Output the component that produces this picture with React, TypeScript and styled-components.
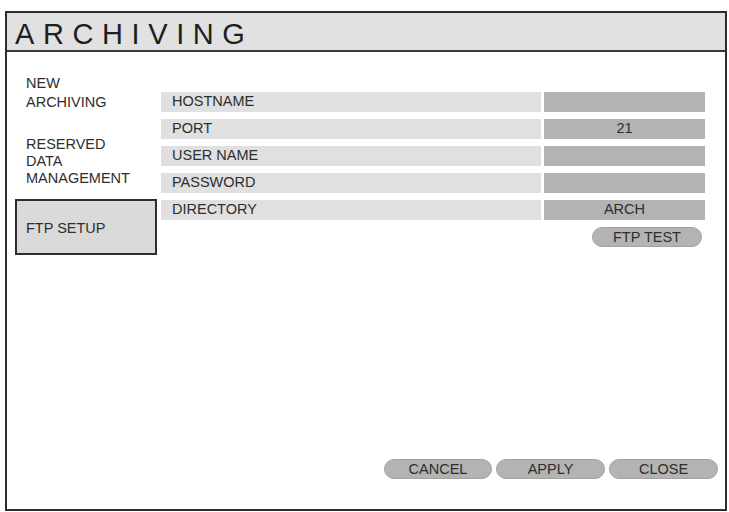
import React from "react";
import styled, { createGlobalStyle } from "styled-components";

const GlobalStyle = createGlobalStyle`
  html, body {
    margin: 0;
    padding: 0;
    background: #ffffff;
  }
  body {
    font-family: "Liberation Sans", Arial, sans-serif;
    color: #2e2e2e;
  }
`;

const Page = styled.div`
  padding: 11px 0 0 5px;
`;

const Frame = styled.div`
  box-sizing: border-box;
  width: 722px;
  height: 500px;
  border: 2px solid #2e2e2e;
  display: flex;
  flex-direction: column;
  background: #ffffff;
`;

const TitleBar = styled.div`
  height: 39px;
  box-sizing: border-box;
  padding: 6px 8px 0;
  background: #e1e1e1;
  border-bottom: 2px solid #3a3a3a;
`;

const Title = styled.h1`
  margin: 0;
  font-size: 29px;
  font-weight: normal;
  line-height: 31px;
  letter-spacing: 8.6px;
  color: #1e1e1e;
`;

const Body = styled.div`
  flex: 1;
  display: flex;
  flex-direction: column;
`;

const Columns = styled.div`
  flex: 1;
  display: flex;
  gap: 4px;
  padding: 0 20px 0 8px;
`;

const Nav = styled.nav`
  width: 142px;
  display: flex;
  flex-direction: column;
  padding-top: 22px;
`;

const NavItem = styled.div<{ $active?: boolean; $lh: number; $gap: number }>`
  font-size: 14.5px;
  line-height: ${(p) => p.$lh}px;
  margin-bottom: ${(p) => p.$gap}px;
  color: #2e2e2e;
  ${(p) =>
    p.$active
      ? `
    box-sizing: border-box;
    height: 56px;
    display: flex;
    align-items: center;
    padding: 2px 0 0 9px;
    background: #dadada;
    border: 2px solid #2e2e2e;
  `
      : `
    padding-left: 11px;
  `}
`;

const Form = styled.div`
  flex: 1;
  display: flex;
  flex-direction: column;
  gap: 7px;
  padding-top: 40px;
`;

const Row = styled.div`
  display: flex;
  gap: 3px;
  height: 20px;
`;

const Label = styled.div`
  flex: 1;
  background: #e0e0e0;
  font-size: 14.5px;
  line-height: 19px;
  padding-left: 11px;
  color: #2e2e2e;
`;

const Value = styled.div`
  width: 161px;
  background: #b3b3b3;
  font-size: 14.5px;
  line-height: 19px;
  text-align: center;
  color: #2e2e2e;
`;

const TestRow = styled.div`
  display: flex;
  justify-content: flex-end;
  padding-right: 3px;
`;

const PillButton = styled.button<{ $w: number }>`
  box-sizing: border-box;
  width: ${(p) => p.$w}px;
  height: 20px;
  padding: 0;
  border: 1px solid #a2a2a2;
  border-radius: 10px;
  background: #b3b3b3;
  font-family: "Liberation Sans", Arial, sans-serif;
  font-size: 14.5px;
  line-height: 18px;
  color: #2e2e2e;
  cursor: pointer;
`;

const Footer = styled.div`
  display: flex;
  justify-content: flex-end;
  gap: 4px;
  padding: 0 7px 30px 0;
`;

const fields: { label: string; value: string }[] = [
  { label: "HOSTNAME", value: "" },
  { label: "PORT", value: "21" },
  { label: "USER NAME", value: "" },
  { label: "PASSWORD", value: "" },
  { label: "DIRECTORY", value: "ARCH" },
];

export default function App() {
  return (
    <>
      <GlobalStyle />
      <Page>
        <Frame>
          <TitleBar>
            <Title>ARCHIVING</Title>
          </TitleBar>
          <Body>
            <Columns>
              <Nav>
                <NavItem $lh={19} $gap={24}>
                  NEW
                  <br />
                  ARCHIVING
                </NavItem>
                <NavItem $lh={17} $gap={12}>
                  RESERVED
                  <br />
                  DATA
                  <br />
                  MANAGEMENT
                </NavItem>
                <NavItem $active $lh={17} $gap={0}>
                  FTP SETUP
                </NavItem>
              </Nav>
              <Form>
                {fields.map((f) => (
                  <Row key={f.label}>
                    <Label>{f.label}</Label>
                    <Value>{f.value}</Value>
                  </Row>
                ))}
                <TestRow>
                  <PillButton $w={110}>FTP TEST</PillButton>
                </TestRow>
              </Form>
            </Columns>
            <Footer>
              <PillButton $w={108}>CANCEL</PillButton>
              <PillButton $w={109}>APPLY</PillButton>
              <PillButton $w={109}>CLOSE</PillButton>
            </Footer>
          </Body>
        </Frame>
      </Page>
    </>
  );
}
